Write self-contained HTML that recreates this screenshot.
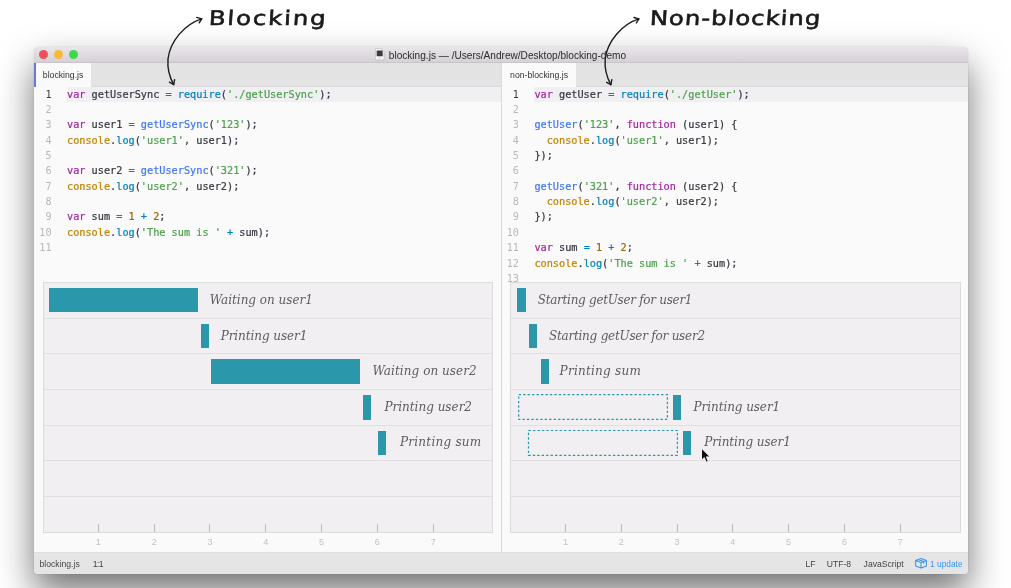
<!DOCTYPE html>
<html lang="en">
<head>
<meta charset="utf-8">
<title>blocking.js — /Users/Andrew/Desktop/blocking-demo</title>
<style>
*{box-sizing:border-box;margin:0;padding:0}
html,body{width:1011px;height:588px;overflow:hidden;background:#fff}
body{position:relative;font-family:"Liberation Sans",sans-serif;color:#383a42}
.abs{position:absolute}
/* window */
#win{position:absolute;left:34px;top:46.5px;width:934.3px;height:527.9px;border-radius:5px 5px 4px 4px;background:#fafafa;
 box-shadow:0 0 1px rgba(0,0,0,.4),0 18px 36px rgba(0,0,0,.55);}
#winclip{position:absolute;left:0;top:0;width:100%;height:100%;border-radius:5px 5px 4px 4px;overflow:hidden}
#title{position:absolute;left:0;top:0;width:100%;height:16.2px;background:linear-gradient(#e9e6ea,#d5d1d6);border-bottom:1px solid #c8c4c9}
.tl{position:absolute;top:3.7px;width:9px;height:9px;border-radius:50%}
#ttext{position:absolute;left:354.8px;top:0;height:16.2px;line-height:17px;font-size:10.1px;color:#2c2c2c;white-space:nowrap}
#tabbar{position:absolute;left:0;top:16.2px;width:100%;height:23.9px;background:#e3e3e3;border-bottom:1px solid #dadada}
.tab{position:absolute;top:0;height:23.9px;background:#fafafa;font-size:8.7px;line-height:25.8px;color:#333;white-space:nowrap}
#status{position:absolute;left:0;top:505.5px;width:100%;height:23px;background:#e5e5e5;border-top:1px solid #dedede;font-size:8.6px;color:#444;line-height:22.6px}
#status span{position:absolute;top:0;white-space:nowrap}
#divider{position:absolute;left:467.3px;top:16.2px;width:1px;height:489.8px;background:#d9d9d9}
/* code */
.code{position:absolute;top:40.1px;font-family:"DejaVu Sans Mono","Liberation Mono",monospace;font-size:10.22px;line-height:15.36px;white-space:pre;color:#383a42;-webkit-text-stroke:.22px}
.ln{position:absolute;top:40.1px;width:30px;text-align:right;font-family:"DejaVu Sans Mono","Liberation Mono",monospace;font-size:10.15px;line-height:15.36px;color:#b8b8bc;white-space:pre}
.ln b{font-weight:normal;color:#383a42}
.hl{position:absolute;top:40.8px;height:14.6px;background:#f0eff1}
.k{color:#a626a4}.f{color:#4078f2}.s{color:#50a14f}.c{color:#c18401}.r{color:#0184bc}.n{color:#986801}.o{color:#0184bc}
/* charts */
.panel{position:absolute;top:235.5px;width:449.5px;height:251px;background:#f1eff2;border:1px solid #dcdadd}
.row{position:absolute;left:0;width:100%;height:1px;background:#e1dfe2}
.bar{position:absolute;height:24.6px;background:#2b97ab}
.dash{position:absolute;height:25px;border:1px dashed #2b97ab}
.lbl{position:absolute;font-family:"DejaVu Serif","Liberation Serif",serif;font-style:italic;font-size:12px;color:#5c5c62;white-space:nowrap;line-height:14px}
.tick{position:absolute;top:241px;width:1px;height:8px;background:#b9b9bc}
.tn{position:absolute;top:253.6px;width:20px;margin-left:-9.5px;text-align:center;font-size:9px;color:#c2c2c5;line-height:11px}
.note{position:absolute;font-family:"DejaVu Sans","Liberation Sans",sans-serif;font-style:normal;font-weight:normal;color:#1a1a1a;white-space:nowrap;transform-origin:0 100%;transform:scaleX(1.22) skewX(-3deg);-webkit-text-stroke:.6px #1a1a1a}
</style>
</head>
<body>
<div id="stage" style="position:absolute;left:0;top:0;width:1011px;height:588px;will-change:transform">

<div id="win">
 <div id="winclip">
  <div id="title">
   <div class="tl" style="left:5.2px;background:#f0505e"></div>
   <div class="tl" style="left:20px;background:#f7b93e"></div>
   <div class="tl" style="left:34.7px;background:#41d650"></div>
   <svg class="abs" style="left:341.3px;top:1.9px" width="9.4" height="12.4" viewBox="0 0 9.4 12.4"><path d="M1.2 .4 H6.2 L9 3.2 V11 Q9 12 8 12 H1.2 Q.4 12 .4 11 V1.2 Q.4 .4 1.2 .4 Z" fill="#f6f6f6" stroke="#b4b2b4" stroke-width=".6"/><rect x="1.7" y="2.5" width="6" height="5.8" rx=".6" fill="#3c3c3e"/><rect x="3.4" y="9.6" width="2.6" height=".7" fill="#c8c8c8"/></svg>
   <div id="ttext">blocking.js — /Users/Andrew/Desktop/blocking-demo</div>
  </div>
  <div id="tabbar">
   <div class="tab" style="left:0;width:57px;border-left:2px solid #6a76d8;padding-left:6.8px">blocking.js</div>
   <div class="tab" style="left:468.3px;width:73.4px;padding-left:7.8px">non-blocking.js</div>
  </div>
  <div id="divider"></div>

  <!-- left editor -->
  <div class="hl" style="left:32.5px;width:434.8px"></div>
  <div class="ln" style="left:-12.5px"><b>1</b>
2
3
4
5
6
7
8
9
10
11</div>
  <div class="code" style="left:33px"><span class="k">var</span> getUserSync <span class="o">=</span> <span class="r">require</span>(<span class="s">'./getUserSync'</span>);

<span class="k">var</span> user1 <span class="o">=</span> <span class="f">getUserSync</span>(<span class="s">'123'</span>);
<span class="c">console</span>.<span class="r">log</span>(<span class="s">'user1'</span>, user1);

<span class="k">var</span> user2 <span class="o">=</span> <span class="f">getUserSync</span>(<span class="s">'321'</span>);
<span class="c">console</span>.<span class="r">log</span>(<span class="s">'user2'</span>, user2);

<span class="k">var</span> sum <span class="o">=</span> <span class="n">1</span> <span class="o">+</span> <span class="n">2</span>;
<span class="c">console</span>.<span class="r">log</span>(<span class="s">'The sum is '</span> <span class="o">+</span> sum);
</div>

  <!-- right editor -->
  <div class="hl" style="left:499.9px;width:434.6px"></div>
  <div class="ln" style="left:454.9px"><b>1</b>
2
3
4
5
6
7
8
9
10
11
12
13</div>
  <div class="code" style="left:500.4px"><span class="k">var</span> getUser <span class="o">=</span> <span class="r">require</span>(<span class="s">'./getUser'</span>);

<span class="f">getUser</span>(<span class="s">'123'</span>, <span class="k">function</span> (user1) {
  <span class="c">console</span>.<span class="r">log</span>(<span class="s">'user1'</span>, user1);
});

<span class="f">getUser</span>(<span class="s">'321'</span>, <span class="k">function</span> (user2) {
  <span class="c">console</span>.<span class="r">log</span>(<span class="s">'user2'</span>, user2);
});

<span class="k">var</span> sum <span class="o">=</span> <span class="n">1</span> <span class="o">+</span> <span class="n">2</span>;
<span class="c">console</span>.<span class="r">log</span>(<span class="s">'The sum is '</span> <span class="o">+</span> sum);
</div>

  <!-- left chart -->
  <div class="panel" style="left:9.2px">
   <div class="row" style="top:35px"></div><div class="row" style="top:70px"></div><div class="row" style="top:106px"></div>
   <div class="row" style="top:142px"></div><div class="row" style="top:177px"></div><div class="row" style="top:213px"></div>
   <div class="bar" style="left:4.9px;top:4.9px;width:149px"></div>
   <div class="lbl" style="left:165.5px;top:9.5px">Waiting on user1</div>
   <div class="bar" style="left:156.5px;top:40.8px;width:8.3px"></div>
   <div class="lbl" style="left:176.5px;top:46px"><span style="letter-spacing:-.08px">Printing user1</span></div>
   <div class="bar" style="left:167.3px;top:76.4px;width:149px"></div>
   <div class="lbl" style="left:328.3px;top:80.9px"><span style="letter-spacing:.06px">Waiting on user2</span></div>
   <div class="bar" style="left:318.4px;top:112.2px;width:8.3px"></div>
   <div class="lbl" style="left:340.2px;top:116.6px">Printing user2</div>
   <div class="bar" style="left:333.5px;top:147.8px;width:8.5px"></div>
   <div class="lbl" style="left:355.8px;top:152.3px"><span style="letter-spacing:.24px">Printing sum</span></div>
   <div class="tick" style="left:53.7px"></div><div class="tick" style="left:109.5px"></div><div class="tick" style="left:165.3px"></div><div class="tick" style="left:221.1px"></div><div class="tick" style="left:276.9px"></div><div class="tick" style="left:332.7px"></div><div class="tick" style="left:388.5px"></div>
   <div class="tn" style="left:53.7px">1</div><div class="tn" style="left:109.5px">2</div><div class="tn" style="left:165.3px">3</div><div class="tn" style="left:221.1px">4</div><div class="tn" style="left:276.9px">5</div><div class="tn" style="left:332.7px">6</div><div class="tn" style="left:388.5px">7</div>
  </div>

  <!-- right chart -->
  <div class="panel" style="left:476px;width:450.6px">
   <div class="row" style="top:35px"></div><div class="row" style="top:70px"></div><div class="row" style="top:106px"></div>
   <div class="row" style="top:142px"></div><div class="row" style="top:177px"></div><div class="row" style="top:213px"></div>
   <div class="bar" style="left:6.3px;top:4.9px;width:8.6px"></div>
   <div class="lbl" style="left:26.8px;top:9.5px"><span style="letter-spacing:-.29px">Starting getUser for user1</span></div>
   <div class="bar" style="left:18.2px;top:40.8px;width:8.3px"></div>
   <div class="lbl" style="left:37.9px;top:46px"><span style="letter-spacing:-.23px">Starting getUser for user2</span></div>
   <div class="bar" style="left:29.9px;top:76.4px;width:8.6px"></div>
   <div class="lbl" style="left:48.6px;top:80.9px"><span style="letter-spacing:.24px">Printing sum</span></div>
   <svg class="abs" style="left:5.6px;top:109px" width="160" height="30" viewBox="0 0 160 30"><rect x="1.7" y="2.7" width="148.7" height="24.7" fill="none" stroke="#2b97ab" stroke-width="1.2" stroke-dasharray="2.4 2.05"/></svg>
   <div class="bar" style="left:161.7px;top:112.2px;width:8.3px"></div>
   <div class="lbl" style="left:182.6px;top:116.6px"><span style="letter-spacing:-.08px">Printing user1</span></div>
   <svg class="abs" style="left:15.6px;top:145px" width="160" height="30" viewBox="0 0 160 30"><rect x="1.5" y="2.5" width="148.9" height="24.8" fill="none" stroke="#2b97ab" stroke-width="1.2" stroke-dasharray="2.4 2.05"/></svg>
   <div class="bar" style="left:171.9px;top:147.8px;width:8.3px"></div>
   <div class="lbl" style="left:193.3px;top:152.3px"><span style="letter-spacing:-.08px">Printing user1</span></div>
   <div class="tick" style="left:53.9px"></div><div class="tick" style="left:109.7px"></div><div class="tick" style="left:165.5px"></div><div class="tick" style="left:221.3px"></div><div class="tick" style="left:277.1px"></div><div class="tick" style="left:332.9px"></div><div class="tick" style="left:388.7px"></div>
   <div class="tn" style="left:53.9px">1</div><div class="tn" style="left:109.7px">2</div><div class="tn" style="left:165.5px">3</div><div class="tn" style="left:221.3px">4</div><div class="tn" style="left:277.1px">5</div><div class="tn" style="left:332.9px">6</div><div class="tn" style="left:388.7px">7</div>
  </div>

  <div id="status">
   <span style="left:5.6px">blocking.js</span>
   <span style="left:58.7px;letter-spacing:-.6px">1:1</span>
   <span style="left:771.6px">LF</span>
   <span style="left:792.8px">UTF-8</span>
   <span style="left:829.6px">JavaScript</span>
   <svg class="abs" style="left:880.8px;top:5.4px" width="12" height="10.4" viewBox="0 0 12 10.4"><path d="M.6 2.5 L6 .6 L11.4 2.5 V8 L6 9.9 L.6 8 Z M.6 2.5 L6 4.4 L11.4 2.5 M6 4.4 V9.9 M3.2 1.6 L8.7 3.5 V5.6" fill="none" stroke="#3a96ec" stroke-width="1.05" stroke-linejoin="round"/></svg>
   <span style="left:896.1px;color:#3a96ec;font-size:8.35px">1 update</span>
  </div>
 </div>
</div>

<!-- annotations -->
<div class="note" id="n1" style="left:208px;top:5px;font-size:20px;line-height:26px;letter-spacing:1.55px">Blocking</div>
<div class="note" id="n2" style="left:648.6px;top:5px;font-size:20px;line-height:26px;letter-spacing:.8px">Non-blocking</div>
<svg class="abs" style="left:0;top:0" width="1011" height="100" viewBox="0 0 1011 100" fill="none" stroke="#1c1c1c" stroke-width="1.4" stroke-linecap="round" stroke-linejoin="round">
 <g id="arrowL">
  <path d="M201.7 18.8 C185 24 170 41 168 59 C167.2 69 170 78 173.7 84.6"/>
  <path d="M196.7 17.4 L201.7 18.8 L199.2 22.8"/>
  <path d="M169.5 82.2 L173.7 84.6 L174.6 79.6"/>
 </g>
 <g transform="translate(437.2,0.1)">
  <path d="M201.7 18.8 C185 24 170 41 168 59 C167.2 69 170 78 173.7 84.6"/>
  <path d="M196.7 17.4 L201.7 18.8 L199.2 22.8"/>
  <path d="M169.5 82.2 L173.7 84.6 L174.6 79.6"/>
 </g>
</svg>
<!-- mouse cursor -->
<svg class="abs" style="left:699.8px;top:446.8px" width="12" height="17" viewBox="0 0 12 17"><path d="M1.5 1.2 V13.2 L4.3 10.6 L6.2 15.2 L8.3 14.3 L6.4 9.9 H10.2 Z" fill="#111" stroke="#f2f2f2" stroke-width="1" stroke-linejoin="round"/></svg>

</div>
</body>
</html>
